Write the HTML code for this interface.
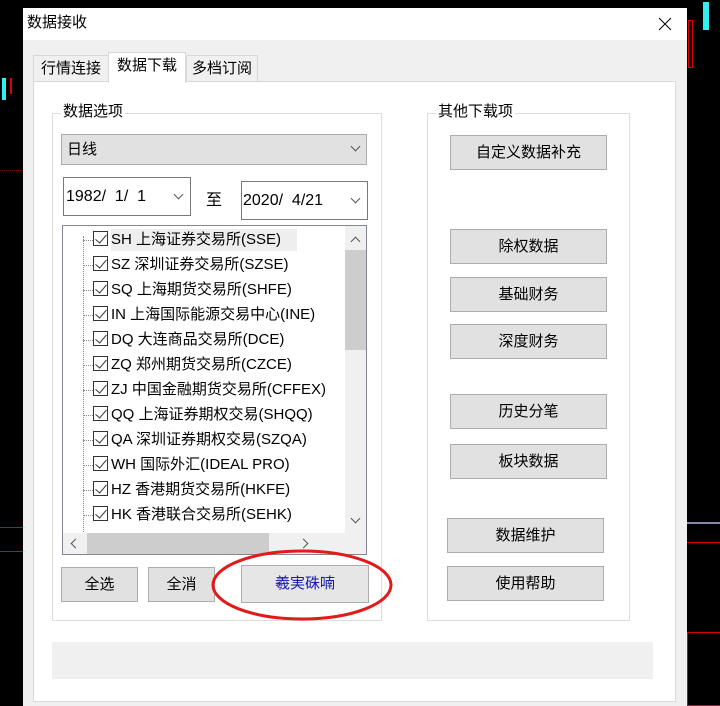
<!DOCTYPE html>
<html><head><meta charset="utf-8"><style>
*{margin:0;padding:0;box-sizing:border-box}
body{width:720px;height:706px;background:#000;position:relative;overflow:hidden;font-family:"Liberation Sans","Noto Sans CJK SC",sans-serif;font-size:15px;color:#000}
.a{position:absolute}
.btn{position:absolute;background:#e1e1e1;border:1px solid #adadad;text-align:center;font-size:15px}
.grp{position:absolute;border:1px solid #dcdcdc}
.gt{position:absolute;background:#fff;padding:0 2px;font-size:15px;top:-11px;line-height:18px}
.it{position:absolute;left:30px;height:20px;line-height:20px;font-size:15px;white-space:nowrap}
.cb{display:inline-block;width:15px;height:15px;border:1px solid #333;vertical-align:-2px;margin-right:3px;position:relative;background:#fff}
.cb:after{content:"";position:absolute;left:4px;top:0px;width:5px;height:10px;border:solid #333;border-width:0 1.5px 1.5px 0;transform:rotate(40deg)}
.dot{position:absolute;left:20px;width:10px;border-top:1px dotted #888}
.chev{position:absolute;width:7px;height:7px;border:solid #555;border-width:0 1px 1px 0;transform:rotate(45deg)}
</style></head><body>
<div class="a" style="left:0;top:170px;width:23px;border-top:1px dotted #600"></div>
<div class="a" style="left:0;top:527px;width:23px;height:25px;border-top:1px solid #d00;border-bottom:1px solid #d00"></div>
<div class="a" style="left:2px;top:78px;width:4px;height:22px;background:#3ee"></div>
<div class="a" style="left:10px;top:78px;width:2px;height:16px;background:#d00"></div>
<div class="a" style="left:687px;top:542px;width:33px;border-top:1px solid #d00"></div>
<div class="a" style="left:687px;top:522px;width:33px;border-top:2px solid #88a"></div>
<div class="a" style="left:688px;top:20px;width:5px;height:48px;border:1px solid #d00"></div>
<div class="a" style="left:703px;top:2px;width:6px;height:28px;background:#3ee"></div>
<div class="a" style="left:687px;top:632px;width:33px;height:74px;border:1px solid #d00;border-right:none"></div>

<div class="a" style="left:23px;top:8px;width:664px;height:698px;background:#f0f0f0"></div>
<div class="a" style="left:23px;top:8px;width:664px;height:32px;background:#fff"></div>
<div class="a" style="left:27px;top:13px;font-size:15px;line-height:20px">数据接收</div>
<svg class="a" style="left:657px;top:16px" width="16" height="16"><path d="M2 2L14 14M14 2L2 14" stroke="#000" stroke-width="1"/></svg>

<div class="a" style="left:33px;top:55px;width:76px;height:27px;border:1px solid #d9d9d9;background:#f0f0f0;text-align:center;line-height:26px">行情连接</div>
<div class="a" style="left:186px;top:55px;width:72px;height:27px;border:1px solid #d9d9d9;background:#f0f0f0;text-align:center;line-height:26px">多档订阅</div>
<div class="a" style="left:33px;top:81px;width:643px;height:621px;background:#fff;border:1px solid #d9d9d9"></div>
<div class="a" style="left:108px;top:52px;width:78px;height:31px;border:1px solid #d9d9d9;border-bottom:none;background:#fff;text-align:center;line-height:26px">数据下载</div>

<div class="grp" style="left:52px;top:113px;width:330px;height:508px"><div class="gt" style="left:8px">数据选项</div></div>
<div class="a" style="left:61px;top:134px;width:306px;height:31px;background:#e1e1e1;border:1px solid #adadad;line-height:29px;padding-left:5px">日线<div class="chev" style="left:290px;top:8px"></div></div>
<div class="a" style="left:63px;top:177px;width:128px;height:39px;border:1px solid #7a7a7a;background:#fff;line-height:37px;padding-left:2px;font-size:16px">1982/&nbsp; 1/&nbsp; 1<div class="chev" style="left:111px;top:13px"></div></div>
<div class="a" style="left:206px;top:186px;font-size:16px">至</div>
<div class="a" style="left:241px;top:181px;width:127px;height:39px;border:1px solid #7a7a7a;background:#fff;line-height:37px;padding-left:1px;font-size:16px">2020/&nbsp; 4/21<div class="chev" style="left:110px;top:13px"></div></div>

<div class="a" style="left:62px;top:225px;width:305px;height:330px;border:1px solid #828790;background:#fff;overflow:hidden">
<div class="a" style="left:20px;top:10px;height:300px;border-left:1px dotted #888"></div>
<div class="a" style="left:48px;top:3px;width:186px;height:22px;background:#eee"></div>
<div class="dot" style="top:14px"></div><div class="it" style="top:4px"><span class="cb"></span>SH 上海证券交易所(SSE)</div>
<div class="dot" style="top:39px"></div><div class="it" style="top:29px"><span class="cb"></span>SZ 深圳证券交易所(SZSE)</div>
<div class="dot" style="top:64px"></div><div class="it" style="top:54px"><span class="cb"></span>SQ 上海期货交易所(SHFE)</div>
<div class="dot" style="top:89px"></div><div class="it" style="top:79px"><span class="cb"></span>IN 上海国际能源交易中心(INE)</div>
<div class="dot" style="top:114px"></div><div class="it" style="top:104px"><span class="cb"></span>DQ 大连商品交易所(DCE)</div>
<div class="dot" style="top:139px"></div><div class="it" style="top:129px"><span class="cb"></span>ZQ 郑州期货交易所(CZCE)</div>
<div class="dot" style="top:164px"></div><div class="it" style="top:154px"><span class="cb"></span>ZJ 中国金融期货交易所(CFFEX)</div>
<div class="dot" style="top:189px"></div><div class="it" style="top:179px"><span class="cb"></span>QQ 上海证券期权交易(SHQQ)</div>
<div class="dot" style="top:214px"></div><div class="it" style="top:204px"><span class="cb"></span>QA 深圳证券期权交易(SZQA)</div>
<div class="dot" style="top:239px"></div><div class="it" style="top:229px"><span class="cb"></span>WH 国际外汇(IDEAL PRO)</div>
<div class="dot" style="top:264px"></div><div class="it" style="top:254px"><span class="cb"></span>HZ 香港期货交易所(HKFE)</div>
<div class="dot" style="top:289px"></div><div class="it" style="top:279px"><span class="cb"></span>HK 香港联合交易所(SEHK)</div>
<div class="a" style="left:282px;top:0;width:21px;height:307px;background:#f0f0f0"></div>
<div class="a" style="left:282px;top:24px;width:21px;height:100px;background:#cdcdcd"></div>
<div class="chev" style="left:289px;top:12px;transform:rotate(225deg)"></div>
<div class="chev" style="left:289px;top:289px"></div>
<div class="a" style="left:0;top:307px;width:303px;height:21px;background:#f0f0f0"></div>
<div class="a" style="left:24px;top:307px;width:182px;height:21px;background:#cdcdcd"></div>
<div class="chev" style="left:9px;top:314px;transform:rotate(135deg)"></div>
<div class="chev" style="left:237px;top:314px;transform:rotate(-45deg)"></div>
</div>

<div class="btn" style="left:61px;top:567px;width:77px;height:35px;line-height:33px">全选</div>
<div class="btn" style="left:148px;top:567px;width:67px;height:35px;line-height:33px">全消</div>
<div class="btn" style="left:241px;top:565px;width:128px;height:38px;line-height:36px;color:#1a1ab0;background:#e6e6e6">羲実硃喃</div>
<svg class="a" style="left:205px;top:545px" width="195" height="80"><ellipse cx="97" cy="40" rx="89" ry="34" fill="none" stroke="#e21a1a" stroke-width="3"/></svg>

<div class="grp" style="left:427px;top:113px;width:203px;height:508px"><div class="gt" style="left:8px">其他下载项</div></div>
<div class="btn" style="left:450px;top:135px;width:157px;height:35px;line-height:33px">自定义数据补充</div>
<div class="btn" style="left:450px;top:229px;width:157px;height:35px;line-height:33px">除权数据</div>
<div class="btn" style="left:450px;top:277px;width:157px;height:35px;line-height:33px">基础财务</div>
<div class="btn" style="left:450px;top:324px;width:157px;height:35px;line-height:33px">深度财务</div>
<div class="btn" style="left:450px;top:394px;width:157px;height:35px;line-height:33px">历史分笔</div>
<div class="btn" style="left:450px;top:444px;width:157px;height:35px;line-height:33px">板块数据</div>
<div class="btn" style="left:447px;top:518px;width:157px;height:35px;line-height:33px">数据维护</div>
<div class="btn" style="left:447px;top:566px;width:157px;height:35px;line-height:33px">使用帮助</div>

<div class="a" style="left:52px;top:642px;width:601px;height:37px;background:#f0f0f0"></div>
</body></html>
